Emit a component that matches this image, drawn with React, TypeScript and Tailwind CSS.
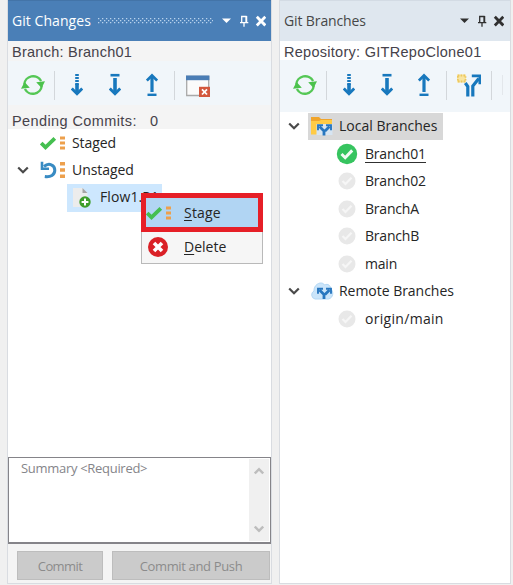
import type { ReactNode } from 'react'

const RefreshIcon = () => (
  <svg className="w-6 h-6 shrink-0" viewBox="0 0 24 24" fill="none">
    <path
      d="M3.2 11.5a9 9 0 0 1 16.900-3.500M20.800 12.500a9 9 0 0 1-16.900 3.500"
      stroke="#55c755"
      strokeWidth="2.4"
    />
    <path d="M15.200 9.200 24 8.200 20.600 15ZM0 15.800 3.600 9 8.800 14.800Z" fill="#4cc24c" />
  </svg>
)

const FetchIcon = () => (
  <svg className="w-3 h-6 shrink-0" viewBox="0 0 12 24" fill="none" stroke="#1878bd">
    <path d="M6 1v11" strokeWidth="3.6" strokeDasharray="2 1" />
    <path d="M6 11v10" strokeWidth="3.6" />
    <path d="m.800 15.500 5.200 5.200 5.200-5.200" strokeWidth="2.8" />
  </svg>
)

const PullIcon = () => (
  <svg className="w-3 h-6 shrink-0" viewBox="0 0 12 24" fill="none" stroke="#1878bd">
    <path d="M1.5 2.2h9" strokeWidth="2.6" />
    <path d="M6 5v16" strokeWidth="3.6" />
    <path d="m.800 15.500 5.200 5.200 5.200-5.200" strokeWidth="2.8" />
  </svg>
)

const PushIcon = () => (
  <svg className="w-3 h-6 shrink-0" viewBox="0 0 12 24" fill="none" stroke="#1878bd">
    <path d="M1.5 21.8h9" strokeWidth="2.4" />
    <path d="M6 3v16" strokeWidth="3.2" />
    <path d="M.800 7.600 6 2.400l5.200 5.200" strokeWidth="2.8" />
  </svg>
)

const CloseWindowIcon = () => (
  <svg className="w-6 h-6 shrink-0" viewBox="0 0 24 24" fill="none">
    <path d="M.7 3.5h22v19H.7z" fill="#fbfbfb" stroke="#a9a9a9" strokeWidth="1.3" />
    <path d="M0 2.5h23.4v4.7H0z" fill="#4a7db5" />
    <path d="M13 13.8h11V24H13z" fill="#d3573d" />
    <path d="m16 16.3 5 5.2m0-5.2-5 5.2" stroke="#fff" strokeWidth="1.8" />
  </svg>
)

const NewBranchIcon = () => (
  <svg className="w-6 h-6 shrink-0" viewBox="0 0 24 24" fill="none">
    <path d="M0 1.500h9v8H0z" fill="#f9e5a1" />
    <path d="M.8 2.500h7.700v6H.8z" stroke="#ecc75f" strokeWidth="1.800" strokeDasharray="1.600 1.200" />
    <path d="M10.800 23.500V13.500L8.300 10M15.800 23.500V13l6-7.500" stroke="#1878bd" strokeWidth="3.200" />
    <path d="M14.800 2.800h8v8.400" stroke="#1878bd" strokeWidth="2.700" />
  </svg>
)

const StageIcon = () => (
  <svg className="w-[26px] h-4 shrink-0" viewBox="0 0 26 16" fill="none">
    <path d="m1.2 8 4.300 4.300L14.800 3.300" stroke="#45bf50" strokeWidth="3.800" />
    <path d="M20 1.500h5v3h-5zM20 6.500h5v3h-5zM20 11.500h5v3h-5z" fill="#eda04c" />
  </svg>
)

const UnstageIcon = () => (
  <svg className="w-[26px] h-4.5 shrink-0" viewBox="0 0 26 18" fill="none">
    <path d="M4 5.500C9 1.200 14.800 4 14.800 9.300c0 4.600-4.200 7-10 6.200" stroke="#388bc3" strokeWidth="3" />
    <path d="M2 .8v7h7" stroke="#388bc3" strokeWidth="2.600" />
    <path d="M20 1h5v3.500h-5zM20 7.300h5v3.500h-5zM20 13.500h5V17h-5z" fill="#eda04c" />
  </svg>
)

const FileIcon = () => (
  <svg className="w-[18px] h-5 shrink-0" viewBox="0 0 18 20" fill="none">
    <path d="M0 0h9.5l5 5v14H0z" fill="#ececec" />
    <path d="M9.5 0v5h5z" fill="#a5a5a5" />
    <circle cx="12" cy="14" r="5.700" fill="#3e9e2b" />
    <path d="M12 10.600v6.800M8.600 14h6.800" stroke="#fff" strokeWidth="2" />
  </svg>
)

const DeleteIcon = () => (
  <svg className="w-5 h-5 shrink-0" viewBox="0 0 20 20" fill="none">
    <circle cx="10" cy="10" r="10" fill="#da2127" />
    <path d="m6 6 8 8m0-8-8 8" stroke="#fff" strokeWidth="3.600" />
  </svg>
)

const Arrows = () => (
  <g stroke="#2877bf" fill="none">
    <path d="M9.500 10.500 14 15v4.500M19.500 10.500 15 15" strokeWidth="2.800" />
    <path d="M8 14.200V9.300h5M16 9.300h5v4.900" strokeWidth="1.900" />
  </g>
)

const FolderIcon = () => (
  <svg className="w-6 h-5 shrink-0" viewBox="0 0 24 20" fill="none">
    <path d="M1 1h8l2 2h11v4H1z" fill="#f0a52c" />
    <path d="M1 5h8l2-1h11v14.500H1z" fill="#ffcb45" />
    <path d="M6.500 8h16v11h-16z" fill="#d7e5f2" />
    <Arrows />
  </svg>
)

const CloudIcon = () => (
  <svg className="w-6 h-5 shrink-0" viewBox="0 0 24 20" fill="none">
    <path
      d="M5 18a4.300 4.300 0 0 1-1-8C3.500 3 12-.5 14.500 4 18 2 21 5 20.500 8c3.500 2 3 9-2 10z"
      fill="#cbe5fa"
      stroke="#b4d8f5"
    />
    <g transform="translate(0 -1.500)">
      <Arrows />
    </g>
  </svg>
)

const BranchDot = ({ active }: { active?: boolean }) =>
  active ? (
    <svg className="w-5.5 h-5.5 shrink-0" viewBox="0 0 22 22" fill="none">
      <circle cx="11" cy="11" r="10.200" fill="#36c45f" />
      <path d="m5.500 11 3.700 3.700 7-7.300" stroke="#f2fbf4" strokeWidth="3" />
    </svg>
  ) : (
    <svg className="w-5.5 h-5.5 shrink-0" viewBox="0 0 22 22" fill="none">
      <circle cx="11" cy="11" r="8.500" fill="#e8e8e8" />
      <path d="m6.500 11 3 3 6-6.200" stroke="#f6f6f6" strokeWidth="2.200" />
    </svg>
  )

const Chevron = () => (
  <svg className="w-3 h-2 shrink-0" viewBox="0 0 12 8" fill="none">
    <path d="M1.200 1.500 6 6.300l4.800-4.800" stroke="#4a4a4a" strokeWidth="2.200" />
  </svg>
)

const WindowControls = () => (
  <svg className="w-11 h-3 shrink-0" viewBox="0 0 44 12" fill="none">
    <path d="M0 3.500h9L4.500 8z" fill="currentColor" />
    <path
      d="M19.700 7.500V1.500h4.300v6M24.600 1v6.500M18 7.700h8.300M22 8v3.700"
      stroke="currentColor"
      strokeWidth="1.300"
    />
    <path d="m34.800 1.800 8.500 8.600m0-8.600-8.500 8.600" stroke="currentColor" strokeWidth="2.800" />
  </svg>
)

const Grip = () => (
  <svg className="w-[115px] h-[6px]" fill="#b9d2ec">
    <defs>
      <pattern id="grip" width="4" height="6" patternUnits="userSpaceOnUse">
        <path d="M0 0h1.300v1.300H0zM2 2h1.300v1.300H2zM0 4h1.300v1.300H0z" />
      </pattern>
    </defs>
    <rect width="116" height="6" fill="url(#grip)" />
  </svg>
)

const Separator = () => <div className="w-px h-[29px] bg-[#d3d7db] shrink-0" />

const Row = ({ children, className = '' }: { children: ReactNode; className?: string }) => (
  <div className={`flex items-center h-[27.5px] ${className}`}>{children}</div>
)

const branches = [
  { name: 'Branch01', active: true },
  { name: 'Branch02' },
  { name: 'BranchA' },
  { name: 'BranchB' },
  { name: 'main' }
]

const GitChanges = () => (
  <section className="relative flex flex-col w-[265px] h-[584px] border-x border-b border-[#d9dce1] bg-[#f4f4f4]">
    <header className="flex items-center h-[41px] pl-1 pr-[5px] bg-[#4a7fb7] border-t border-[#4374a8] text-white shrink-0">
      <h2 className="w-[86px] text-sm tracking-[0.06px] whitespace-nowrap">Git Changes</h2>
      <Grip />
      <div className="ml-auto">
        <WindowControls />
      </div>
    </header>

    <p className="h-5 pl-1 pt-[2px] font-['Liberation_Sans'] text-[14.5px] leading-[19px] text-[#46424a] shrink-0 tracking-[0.25px]">
      Branch: Branch01
    </p>

    <div className="flex items-center h-[44px] pt-1 pl-[13px] bg-[#f1f6fa] shrink-0">
      <RefreshIcon />
      <div className="flex items-center pl-[9px] pr-[16px]"><Separator /></div>
      <div className="flex items-center gap-[25.5px]">
        <FetchIcon />
        <PullIcon />
        <PushIcon />
      </div>
      <div className="flex items-center pl-4 pr-[11px]"><Separator /></div>
      <CloseWindowIcon />
    </div>

    <p className="flex h-6 pl-1 pt-[7px] font-['Liberation_Sans'] text-[14.5px] leading-[19px] text-[#46424a] shrink-0">
      <span className="w-[138px] tracking-[0.4px]">Pending Commits:</span>
      <span>0</span>
    </p>

    <div className="flex-1 bg-white">
      <Row className="pl-8 gap-[6px]">
        <StageIcon />
        <span className="tracking-[-0.1px]">Staged</span>
      </Row>
      <Row className="pl-[9px]">
        <Chevron />
        <div className="flex items-center pl-[11px] gap-[6px]">
          <UnstageIcon />
          <span className="tracking-[-0.05px]">Unstaged</span>
        </div>
      </Row>
      <Row className="w-[95px] ml-[59px] pl-[6px] gap-[9px] bg-[#cde7fe]">
        <FileIcon />
        <span className="pb-[2px] tracking-[0.1px]">Flow1.P1</span>
      </Row>
    </div>

    <div className="flex justify-between h-[87px] pl-3 pr-px py-px border-[1.5px] border-b-2 border-[#858489] bg-white shrink-0">
      <span className="text-[13px] tracking-[-0.3px] text-[#85858a]">Summary &lt;Required&gt;</span>
      <div className="flex flex-col items-center justify-between w-5 py-2 bg-[#f0f0f0] text-[#bdbdbd]">
        <svg className="w-[10px] h-2" viewBox="0 0 10 8" fill="none">
          <path d="m.800 6.500 4.200-4.300 4.200 4.300" stroke="currentColor" strokeWidth="2.500" />
        </svg>
        <svg className="w-[10px] h-2" viewBox="0 0 10 8" fill="none">
          <path d="m.800 1.500 4.200 4.300 4.200-4.300" stroke="currentColor" strokeWidth="2.500" />
        </svg>
      </div>
    </div>

    <footer className="flex gap-[9px] h-[39px] pt-[7px] pl-[9px] text-[13px] text-[#8b8b8b] shrink-0">
      <button className="w-[86px] h-[29px] pt-[2px] border border-[#bdbdbd] bg-[#cbcbcb] tracking-[-0.6px]">Commit</button>
      <button className="w-[158px] h-[29px] pt-[2px] border border-[#bdbdbd] bg-[#cbcbcb] tracking-[-0.35px]">Commit and Push</button>
    </footer>

    <div className="absolute left-[133px] top-[193px] w-[122px] h-[71px] border border-[#b9b9b9] bg-[#f6f6f6]">
      <div className="flex items-center w-[122px] h-[39px] -mt-px -ml-px border-[5px] border-[#e61f27] bg-[#b1d5f3]">
        <StageIcon />
        <span className="pl-3 tracking-[0.2px]"><u className="underline-offset-2">S</u>tage</span>
      </div>
      <div className="flex items-center h-[30px] pl-[6px]">
        <DeleteIcon />
        <span className="pl-4"><u className="underline-offset-2">D</u>elete</span>
      </div>
    </div>
  </section>
)

const GitBranches = () => (
  <section className="flex flex-col w-[232px] h-[584px] border-x border-b border-[#d9dce1] bg-white">
    <header className="flex items-center justify-between h-[41px] pl-1 pr-[6px] bg-[#dfe7ef] border-t border-[#d3dbe4] text-[#303030] shrink-0">
      <h2 className="text-sm tracking-[-0.12px] text-[#474747]">Git Branches</h2>
      <WindowControls />
    </header>

    <p className="h-[19px] pl-1 pt-[2px] font-['Liberation_Sans'] text-[14.5px] leading-[19px] text-[#46424a] whitespace-nowrap shrink-0 tracking-[0.28px]">
      Repository: GITRepoClone01
    </p>

    <div className="flex items-center h-[52px] pl-[13px] pb-[2px] bg-[#f1f6fa] shrink-0">
      <RefreshIcon />
      <div className="flex items-center pl-[9px] pr-4"><Separator /></div>
      <div className="flex items-center gap-[25.5px]">
        <FetchIcon />
        <PullIcon />
        <PushIcon />
      </div>
      <div className="flex items-center pl-4 pr-[10px]"><Separator /></div>
      <NewBranchIcon />
      <div className="flex items-center pl-[10px]"><Separator /></div>
      <div className="w-px h-5 ml-[10px] bg-[#e3e7eb]" />
    </div>

    <div className="flex-1 pt-[0.5px]">
      <Row className="pl-2">
        <Chevron />
        <div className="flex items-center w-[135px] h-[27px] ml-2 pl-[2px] gap-[5px] bg-[#d8d8d8]">
          <FolderIcon />
          <span className="whitespace-nowrap">Local Branches</span>
        </div>
      </Row>
      {branches.map(({ name, active }) => (
        <Row key={name} className="pl-14 gap-[7px]">
          <BranchDot active={active} />
          <span
            className={`tracking-[-0.2px] ${active ? 'border-b border-[#303030] leading-[17px]' : ''}`}
          >
            {name}
          </span>
        </Row>
      ))}
      <Row className="pl-2">
        <Chevron />
        <div className="flex items-center pl-[10px] gap-[5px]">
          <CloudIcon />
          <span className="tracking-[-0.03px]">Remote Branches</span>
        </div>
      </Row>
      <Row className="pl-14 gap-[7px]">
        <BranchDot />
        <span className="tracking-[0.3px]">origin/main</span>
      </Row>
    </div>
  </section>
)

const App = () => (
  <main className="flex gap-[7px] w-[513px] h-[585px] pl-[7px] overflow-hidden bg-[#f0f0f0] font-['Open_Sans',sans-serif] text-sm text-[#252525]">
    <GitChanges />
    <GitBranches />
  </main>
)

export default App
